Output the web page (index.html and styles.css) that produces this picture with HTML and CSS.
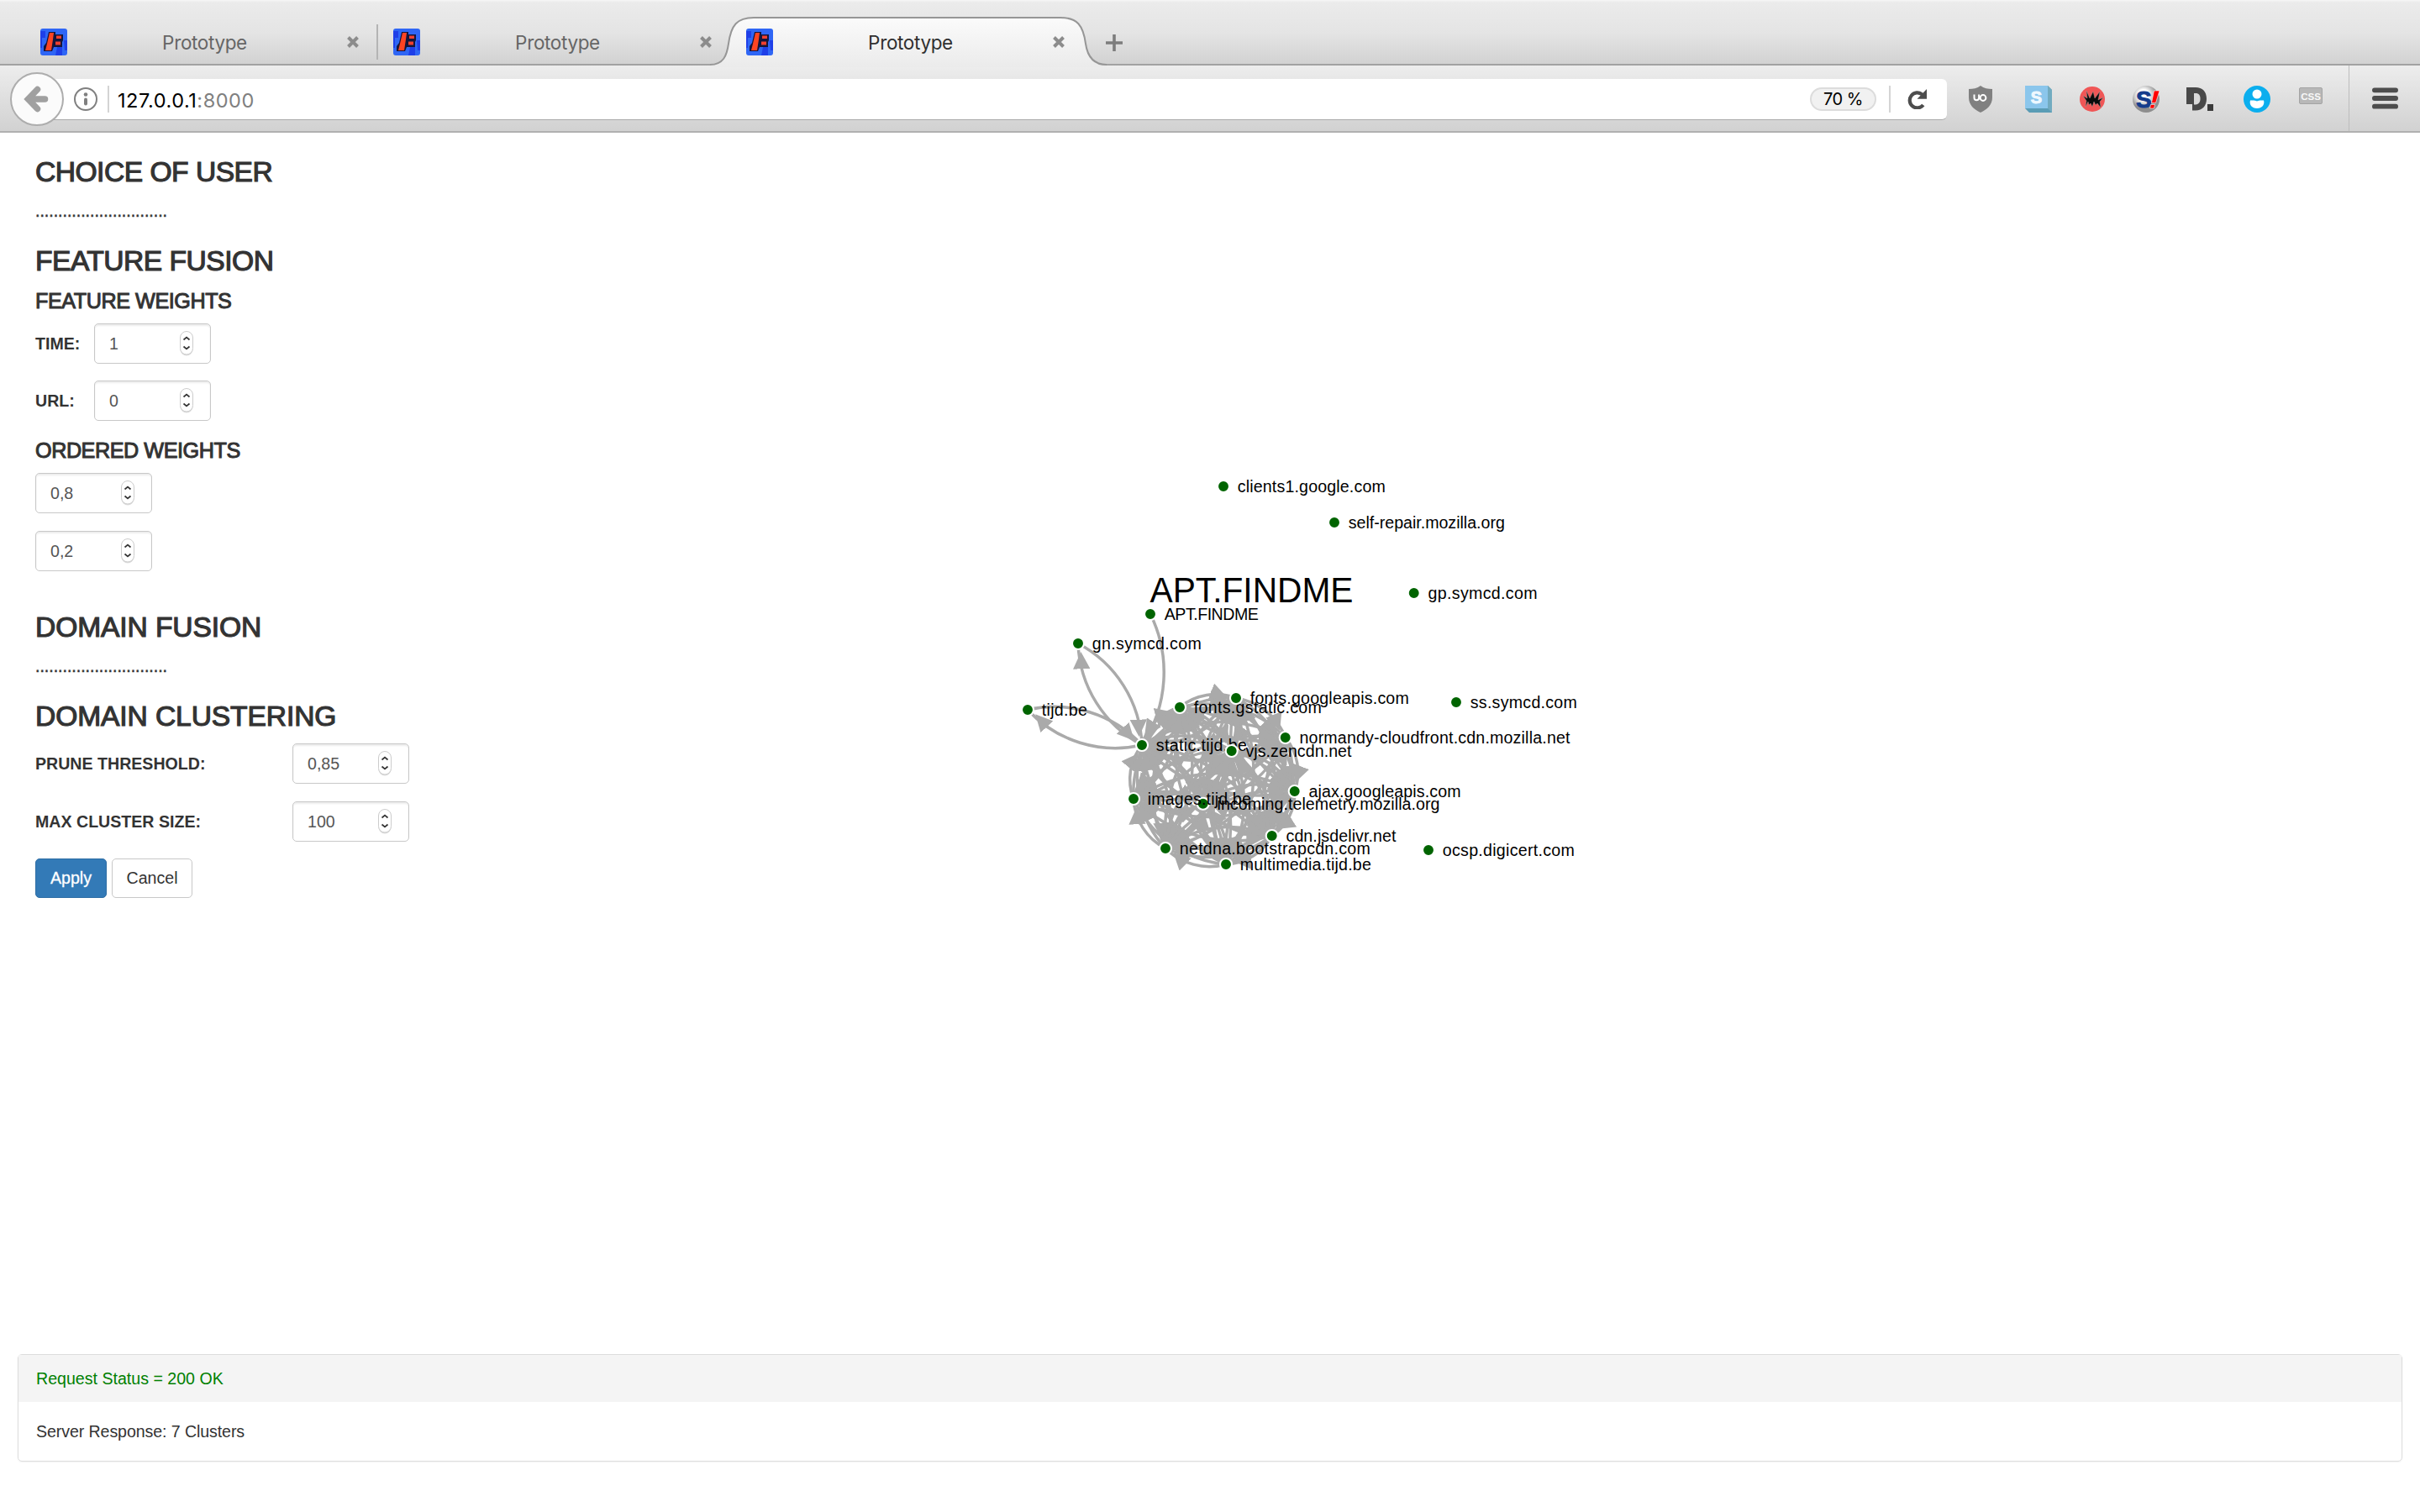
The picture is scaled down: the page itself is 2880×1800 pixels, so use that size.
FILE: index.html
```html
<!DOCTYPE html>
<html lang="en">
<head>
<meta charset="utf-8">
<title>Prototype</title>
<link rel="stylesheet" href="styles.css">
</head>
<body>
<svg class="defs" width="0" height="0" aria-hidden="true">
  <defs>
    <symbol id="favicon" viewBox="0 0 32 32">
      <rect width="32" height="32" rx="3" fill="#2f66f5"/>
      <path d="M0 3h6v8h-4v12h-2zM20 22h6v10h-8zM28 14h4v12h-3z" fill="#1f3fe8"/>
      <path d="M10 4h8v3h9v7l-1 2v6h-10l-2 5h-10v-6l3-4z" fill="#15153a"/>
      <path d="M11 5h5l-1 8-2 13h-7l2-8z" fill="#ff4422"/>
      <path d="M19 8.500h6v3.500h-6zM18 15.500h6v4h-6z" fill="#f04030"/>
    </symbol>
    <symbol id="close" viewBox="0 0 16 16">
      <path d="M2.500 2.500l11 11M13.500 2.500l-11 11" stroke="#8c8c8c" stroke-width="4" fill="none"/>
    </symbol>
    <symbol id="spinner" viewBox="0 0 18 32">
      <rect x="1.500" y="2.500" width="15" height="28" rx="7.500" fill="#bbb" opacity=".5"/>
      <rect x="1.500" y="1.500" width="15" height="27.500" rx="7.500" fill="#fff" stroke="#ccc"/>
      <path d="M5.500 11.500l3.500-3 3.500 3M5.500 19.500l3.500 3 3.500-3" fill="none" stroke="#333" stroke-width="1.700"/>
    </symbol>
  </defs>
</svg>

<header class="tabs">
  <div class="tab">
    <svg class="fav"><use href="#favicon"/></svg><span class="title">Prototype</span><svg class="close"><use href="#close"/></svg>
  </div>
  <div class="tab">
    <svg class="fav"><use href="#favicon"/></svg><span class="title">Prototype</span><svg class="close"><use href="#close"/></svg>
  </div>
  <div class="tab active">
    <svg class="shape" viewBox="0 0 472 60">
      <defs><linearGradient id="tabfill" x1="0" y1="0" x2="0" y2="1"><stop offset="0" stop-color="#fbfbfb"/><stop offset="1" stop-color="#ebebeb"/></linearGradient></defs>
      <path d="M0 60V57C16 57 20 46 22 32C25 10 32 1 52 1H417C437 1 444 10 447 32C449 46 455 57 472 57V60z" fill="url(#tabfill)"/>
      <path d="M0 57C16 57 20 46 22 32C25 10 32 1 52 1H417C437 1 444 10 447 32C449 46 455 57 472 57" fill="none" stroke="#969696" stroke-width="2"/>
    </svg>
    <svg class="fav"><use href="#favicon"/></svg><span class="title">Prototype</span><svg class="close"><use href="#close"/></svg>
  </div>
  <svg class="plus" viewBox="0 0 20 20"><path d="M10 0v20M0 10h20" stroke="#7d7d7d" stroke-width="3.600"/></svg>
</header>

<nav class="toolbar">
  <div class="back"><svg viewBox="0 0 64 64"><circle cx="32" cy="32" r="31" fill="#fbfbfb" stroke="#adadad" stroke-width="2"/><path d="M41.500 32H23M32.500 20.500L21.500 32L32.500 43.500" fill="none" stroke="#a0a0a0" stroke-width="7.500" stroke-linecap="round"/></svg></div>
  <div class="urlbar">
    <svg class="info" viewBox="0 0 28 28"><circle cx="14" cy="14" r="13" fill="none" stroke="#808080" stroke-width="2"/><circle cx="14" cy="8.500" r="2.300" fill="#808080"/><path d="M14 14.500v5" stroke="#808080" stroke-width="4" stroke-linecap="round"/></svg>
    <i class="rule"></i>
    <span class="url">127.0.0.1<em>:8000</em></span>
    <span class="zoom">70 %</span>
    <i class="rule"></i>
    <svg class="reload" viewBox="0 0 24 24"><path d="M17.500 6.500A9 9 0 1 0 18.800 19" fill="none" stroke="#4d4d4d" stroke-width="4.200"/><path d="M23 0v11.800H11.500z" fill="#4d4d4d"/></svg>
  </div>
  <div class="addons">
    <svg class="wide" viewBox="0 0 32 32"><path d="M16 0C12 3 7 4 2 4v10c0 9 6 14 14 18 8-4 14-9 14-18V4c-5 0-10-1-14-4z" fill="#808080"/><path d="M8.500 10.500v4a2.800 2.800 0 0 0 5.600 0v-4" fill="none" stroke="#fff" stroke-width="2"/><circle cx="19" cy="14.500" r="3.400" fill="none" stroke="#fff" stroke-width="2"/></svg>
    <svg viewBox="0 0 32 32"><path d="M0 27h27V0l5 5v27H5z" fill="#5a9cb5"/><path d="M27 0l5 5v27l-5-5z" fill="#72abc0"/><rect width="27" height="27" fill="#8bc6ec"/><text x="13.500" y="20.500" text-anchor="middle" class="glyph" font-size="20" fill="#eef8ff" stroke="#eef8ff">S</text></svg>
    <svg viewBox="0 0 32 32"><circle cx="16" cy="16" r="15" fill="#f05656"/><path d="M8 25L9 18 5 12l5 3-1-9 4 9 4-8 2 8 6-8-2 10 6-3-4 5 1 7-4-5-2 2-2-4-2 6-2-4-2 2-1-4z" fill="#0a0a0a" stroke="#aaa" stroke-width=".4"/></svg>
    <svg viewBox="0 0 32 32"><defs><radialGradient id="ball" cx=".4" cy=".35"><stop offset=".4" stop-color="#fff"/><stop offset="1" stop-color="#8e8e8e"/></radialGradient></defs><circle cx="16" cy="16" r="16" fill="url(#ball)"/><text x="4" y="25.500" class="glyph" font-size="28" fill="#143c8c" stroke="#143c8c">S</text><path d="M25.500 6H32l-4.500 14.500H22.500zM21.500 22.500h5l-1 4.500h-5z" fill="#f00" stroke="#fff" stroke-width=".6"/></svg>
    <svg class="mid" viewBox="0 0 32 32"><path d="M0 2h11c8 0 13 5 13 13.500S19 29.500 11 29.500H7V22H0z" fill="#484848"/><path d="M9 9h2c4 0 5.500 2.500 5.500 6.500S15 22 11 22.500H9z" fill="#d8d8d8"/><rect x="25" y="22" width="7" height="8" fill="#3a3a3a"/></svg>
    <svg viewBox="0 0 32 32"><circle cx="16" cy="16" r="16" fill="#0baeee"/><circle cx="16" cy="10" r="5.500" fill="#fff"/><path d="M8 17.500c3 0 5-.5 8 1 3-1.500 5-1 8-1 1.500 5-2 9.500-8 9.500S6.500 22.500 8 17.500z" fill="#fff"/></svg>
    <svg viewBox="0 0 32 32"><rect x="2.500" y="2.500" width="27" height="19" rx="1.500" fill="#b8b8b8" stroke="#a4a4a4"/><text x="16" y="16.500" text-anchor="middle" class="glyph" font-size="11.500" fill="#f8f8f8">CSS</text></svg>
  </div>
  <svg class="menu" viewBox="0 0 32 26"><path d="M3 3h26M3 13h26M3 23h26" stroke="#4d4d4d" stroke-width="6" stroke-linecap="round"/></svg>
</nav>

<main class="page">
  <form class="side">
    <h3>CHOICE OF USER</h3>
    <p class="dots">.............................</p>
    <h3>FEATURE FUSION</h3>
    <h4>FEATURE WEIGHTS</h4>
    <div class="row"><label class="short">TIME:</label><span class="num">1<svg><use href="#spinner"/></svg></span></div>
    <div class="row"><label class="short">URL:</label><span class="num">0<svg><use href="#spinner"/></svg></span></div>
    <h4 class="second">ORDERED WEIGHTS</h4>
    <div class="row spaced"><span class="num">0,8<svg><use href="#spinner"/></svg></span></div>
    <div class="row"><span class="num">0,2<svg><use href="#spinner"/></svg></span></div>
    <h3 class="domain fusion">DOMAIN FUSION</h3>
    <p class="dots">.............................</p>
    <h3 class="domain last">DOMAIN CLUSTERING</h3>
    <div class="row spaced"><label class="long">PRUNE THRESHOLD:</label><span class="num">0,85<svg><use href="#spinner"/></svg></span></div>
    <div class="row"><label class="long">MAX CLUSTER SIZE:</label><span class="num">100<svg><use href="#spinner"/></svg></span></div>
    <div class="buttons"><span class="btn primary">Apply</span><span class="btn">Cancel</span></div>
  </form>
  <svg class="graph" id="graph" viewBox="520 158 2360 1454">
    <defs>
      <marker id="arrow" viewBox="0 -5 10 10" refX="15" refY="-1.5" markerWidth="5.800" markerHeight="5.800" orient="auto"><path d="M0,-5L10,0L0,5" fill="#aaa"/></marker>
    </defs>
    <g id="links"></g>
    <g id="nodes"></g>
    <text class="big" x="1368.500" y="717" textLength="242" lengthAdjust="spacingAndGlyphs">APT.FINDME</text>
  </svg>
</main>

<section class="panel">
  <div class="panel-head">Request Status = 200 OK</div>
  <div class="panel-body">Server Response: 7 Clusters</div>
</section>
<script src="graph.js"></script>
</body>
</html>
```
FILE: styles.css
```css
* { box-sizing: border-box; }
body {
  margin: 0;
  width: 2880px;
  height: 1800px;
  overflow: hidden;
  background: #fff;
  color: #333;
  font: 19.6px/28px "Liberation Sans", Arial, sans-serif;
}
.defs { position: absolute; }
svg { display: block; flex: none; }

/* tab strip */
.tabs {
  display: flex;
  height: 78px;
  padding-left: 30px;
  background: linear-gradient(#f6f6f6 0, #ebebeb 3px, #e4e4e4 40px, #d2d2d2 76px);
  border-bottom: 2px solid #a2a2a2;
  font-family: Inter, sans-serif;
}
.tab {
  position: relative;
  display: flex;
  align-items: center;
  width: 420px;
  height: 76px;
  padding: 24px 22px 0 18px;
}
.tab:first-child::after {
  content: "";
  position: absolute;
  right: 0;
  top: 29px;
  width: 2px;
  height: 42px;
  background: #b4b4b4;
}
.fav { width: 32px; height: 32px; position: relative; }
.title {
  position: relative;
  flex: 1;
  padding: 1px 5px 0 0;
  text-align: center;
  font-size: 22.5px;
  letter-spacing: -0.35px;
  color: #666;
}
.active .title { color: #303030; }
.close { width: 16px; height: 16px; position: relative; }
.shape { position: absolute; left: -25px; top: 20px; width: 472px; height: 60px; }
.plus { width: 20px; height: 20px; margin: 41px 0 0 26px; }

/* navigation toolbar */
.toolbar {
  display: flex;
  align-items: center;
  height: 80px;
  padding: 0 26px 0 12px;
  background: linear-gradient(#ededed, #e6e6e6 20px, #d2d2d2 76px);
  border-bottom: 2px solid #b0b0b0;
  font-family: Inter, sans-serif;
}
.back { position: relative; z-index: 1; width: 64px; height: 64px; margin-top: 2px; }
.back svg { width: 64px; height: 64px; }
.urlbar {
  display: flex;
  align-items: center;
  width: 2257px;
  height: 49px;
  margin: 3px 0 0 -16px;
  padding: 0 23px 0 28px;
  background: #fff;
  border-bottom: 1px solid #aaa;
  border-radius: 0 6px 6px 0;
}
.info { width: 28px; height: 28px; }
.rule { width: 2px; height: 32px; margin-left: 12px; background: #d4d4d4; }
.url { flex: 1; padding: 3px 0 0 10px; font-size: 23.5px; letter-spacing: 0.55px; color: #000; }
.url em { font-style: normal; color: #808080; }
.zoom {
  width: 79px;
  height: 28px;
  margin-right: 3px;
  border: 2px solid #dcdcdc;
  border-radius: 14px;
  background: #f1f1f1;
  color: #000;
  font-size: 20px;
  line-height: 25px;
  letter-spacing: -0.5px;
  text-align: center;
}
.reload { width: 24px; height: 24px; margin-left: 20px; }
.addons { display: flex; gap: 32px; margin: 2px 0 0 24px; }
.addons svg { width: 32px; height: 32px; }
.addons .wide { margin-right: 5px; }
.addons .mid { margin-right: 4px; }
.glyph { font-family: "Liberation Sans", Arial, sans-serif; font-weight: bold; }
.menu {
  width: 59px;
  height: 78px;
  margin-left: auto;
  padding: 26px 0 26px 27px;
  border-left: 1px solid #bdbdbd;
}

/* page */
.page { display: grid; grid-template-columns: 520px 1fr; height: 1454px; }
.side { padding: 29px 0 0 42px; }
h3, h4, p { margin: 0; font-weight: normal; }
h3 { height: 37px; font-size: 33.6px; line-height: 36px; letter-spacing: -0.5px; -webkit-text-stroke: 1.2px #333; }
h4 { height: 28px; font-size: 25.2px; line-height: 28px; letter-spacing: -0.45px; -webkit-text-stroke: 1px #333; margin: 14px 0 13px; }
.domain { letter-spacing: -0.1px; }
.second { margin-top: 21px; }
.dots { margin: 13px 0 28px; letter-spacing: -0.03px; -webkit-text-stroke: 0.5px #333; }
.row { display: flex; align-items: center; height: 48px; margin-bottom: 20px; }
.spaced { margin-bottom: 21px; }
label { font-weight: bold; }
.short { width: 70px; }
.long { width: 306px; }
.num {
  display: flex;
  align-items: center;
  justify-content: space-between;
  width: 139px;
  height: 48px;
  padding: 0 19px 0 17px;
  border: 1px solid #c8c8c8;
  border-radius: 5px;
  box-shadow: inset 0 2px 2px rgba(0, 0, 0, 0.075);
  color: #555;
}
.num svg { width: 18px; height: 32px; }
.fusion { margin-top: 49px; }
.last { margin-bottom: 13px; }
.buttons { display: flex; gap: 6px; }
.btn {
  width: 96px;
  height: 47px;
  border: 1px solid #c8c8c8;
  border-radius: 5px;
  line-height: 45px;
  text-align: center;
  color: #333;
}
.primary { width: 85px; background: #337ab7; border-color: #2e6da4; color: #fff; -webkit-text-stroke: 0.3px #fff; }

/* domain graph */
.graph { width: 2360px; height: 1454px; }
.graph text { fill: #000; font-size: 19.6px; }
.graph .big { font-size: 42px; }
.link { fill: none; stroke: #aaa; stroke-width: 3.5px; }
.node { fill: #006400; stroke: #fff; stroke-width: 2.1px; }

/* status panel */
.panel {
  height: 128px;
  margin: 0 21px;
  border: 1px solid #ddd;
  border-radius: 5px;
  box-shadow: 0 1px 2px rgba(0, 0, 0, 0.05);
}
.panel-head { height: 56px; padding: 14px 21px; background: #f4f4f4; color: #008000; }
.panel-body { padding: 21px; letter-spacing: -0.09px; }
```
FILE: graph.js
```js
// name, x, y, label width
const nodes = [
  ["incoming.telemetry.mozilla.org", 1431.7, 956.7, 265],
  ["APT.FINDME", 1369, 731, 112],
  ["gn.symcd.com", 1283, 766, 130],
  ["tijd.be", 1223, 845, 54],
  ["static.tijd.be", 1359, 887, 108],
  ["fonts.gstatic.com", 1404, 842, 152],
  ["fonts.googleapis.com", 1471, 831, 189],
  ["normandy-cloudfront.cdn.mozilla.net", 1529.7, 878, 322],
  ["vjs.zencdn.net", 1465.7, 894, 126],
  ["images.tijd.be", 1349, 951, 123],
  ["ajax.googleapis.com", 1540.7, 942, 181],
  ["cdn.jsdelivr.net", 1513.7, 995, 131],
  ["netdna.bootstrapcdn.com", 1387, 1010, 227],
  ["multimedia.tijd.be", 1459, 1029, 156],
  ["clients1.google.com", 1456, 579, 176],
  ["self-repair.mozilla.org", 1588, 622, 186],
  ["gp.symcd.com", 1682.7, 706, 130],
  ["ss.symcd.com", 1733, 836, 127],
  ["ocsp.digicert.com", 1700, 1012, 157]
];
const cluster = [0, 4, 5, 6, 7, 8, 9, 10, 11, 12, 13];
const links = [[1, 4], [2, 4], [4, 2], [3, 4], [4, 3]];
for (const a of cluster) for (const b of cluster) if (a !== b) links.push([a, b]);

const NS = "http://www.w3.org/2000/svg";
function add(parent, tag, attrs, text) {
  const el = document.createElementNS(NS, tag);
  for (const k in attrs) el.setAttribute(k, attrs[k]);
  if (text) el.textContent = text;
  document.getElementById(parent).appendChild(el);
}
for (const [s, t] of links) {
  const [, x1, y1] = nodes[s], [, x2, y2] = nodes[t];
  const r = Math.hypot(x2 - x1, y2 - y1);
  add("links", "path", { class: "link", d: `M${x1},${y1}A${r},${r} 0 0,1 ${x2},${y2}`, "marker-end": "url(#arrow)" });
}
for (const [name, x, y, w] of nodes) {
  add("nodes", "circle", { class: "node", cx: x, cy: y, r: 7 });
  add("nodes", "text", { x: x + 16.8, y: y + 7, textLength: w }, name);
}
```
